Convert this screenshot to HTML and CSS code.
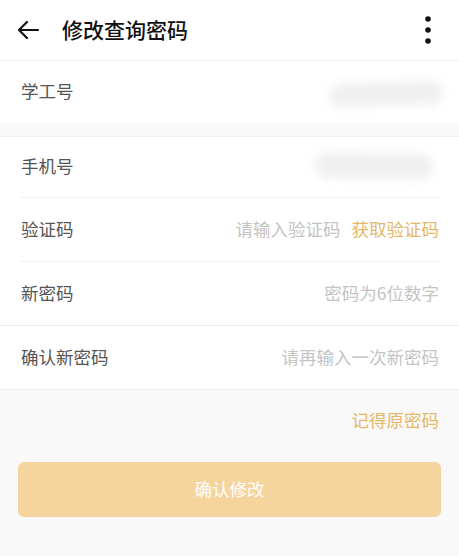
FILE: index.html
```html
<!DOCTYPE html>
<html>
  <head>
    <meta charset="UTF-8">
    <title>修改查询密码</title>
    <link rel="stylesheet" href="styles.css">
  </head>
  <body>
    <div id="header">
      <svg class="back" width="22" height="18" viewBox="0 0 22 18">
        <path d="M21 9H2M10 1L2 9l8 8" fill="none" stroke="#111" stroke-width="2.2" stroke-linecap="round" stroke-linejoin="round"/>
      </svg>
      <h1>修改查询密码</h1>
      <svg class="more" width="8" height="28" viewBox="0 0 8 28">
        <circle cx="4" cy="3" r="2.8" fill="#111"/>
        <circle cx="4" cy="14" r="2.8" fill="#111"/>
        <circle cx="4" cy="25" r="2.8" fill="#111"/>
      </svg>
    </div>

    <div class="group">
      <div class="row">
        <span class="label">学工号</span>
        <span class="blur blur-id"></span>
      </div>
    </div>

    <div class="group group-form">
      <div class="row inset first">
        <span class="label">手机号</span>
        <span class="blur blur-phone"></span>
      </div>
      <div class="row inset">
        <span class="label">验证码</span>
        <span class="hint">请输入验证码</span>
        <span class="link">获取验证码</span>
      </div>
      <div class="row full">
        <span class="label">新密码</span>
        <span class="hint">密码为6位数字</span>
      </div>
      <div class="row full">
        <span class="label">确认新密码</span>
        <span class="hint">请再输入一次新密码</span>
      </div>
    </div>

    <div id="remember">
      <span class="link">记得原密码</span>
    </div>

    <div id="actions">
      <button>确认修改</button>
    </div>
  </body>
</html>
```

FILE: styles.css
```css
body {
  margin: 0;
  background: #f9f9f9;
  font-family: "Noto Sans CJK SC", "Noto Sans", sans-serif;
  color: #333;
}

#header {
  height: 61px;
  box-sizing: border-box;
  padding: 0 27px 3px 17px;
  background: #fff;
  border-bottom: 1px solid #efefef;
  display: flex;
  align-items: center;
}

#header svg {
  margin-top: 3px;
}

#header h1 {
  flex: 1;
  margin: 0 0 0 23px;
  font-size: 21px;
  font-weight: 500;
  color: #111;
}

.group {
  background: #fff;
}

.group-form {
  margin-top: 13px;
  border-top: 1px solid #f0f0f0;
}

.row {
  height: 62px;
  box-sizing: border-box;
  display: flex;
  align-items: center;
  padding: 0 20px 3px 21px;
  font-size: 17.5px;
}

.row.inset {
  height: 64px;
  margin: 0 20px 0 21px;
  padding: 0 0 3px 0;
  border-bottom: 1px solid #f1f1f1;
}

.row.inset.first {
  height: 61px;
}

.row.full {
  height: 64px;
  border-bottom: 1px solid #eeeeee;
}

.label {
  flex: 1;
  color: #555;
}

.hint {
  color: #c4c4c4;
}

.link {
  color: #e3b86a;
  font-size: 17.5px;
}

.row .link {
  margin-left: 11px;
}

.blur {
  display: block;
  background: #f0f0f0;
  border-radius: 14px;
  filter: blur(5px);
}

.blur-id {
  width: 114px;
  height: 24px;
  margin-right: -4px;
  margin-top: 6px;
  transform: rotate(-2deg);
}

.blur-phone {
  width: 118px;
  height: 26px;
  margin-right: 6px;
  transform: rotate(1deg);
}

#remember {
  display: flex;
  justify-content: flex-end;
  box-sizing: border-box;
  height: 72px;
  padding: 17px 20px 0 0;
}

#actions {
  padding: 0 18px;
}

#actions button {
  width: 100%;
  height: 55px;
  padding: 0 0 3px 0;
  border: none;
  border-radius: 6px;
  background: #f5d49e;
  color: #fff;
  font-family: inherit;
  font-size: 17.5px;
}
```
